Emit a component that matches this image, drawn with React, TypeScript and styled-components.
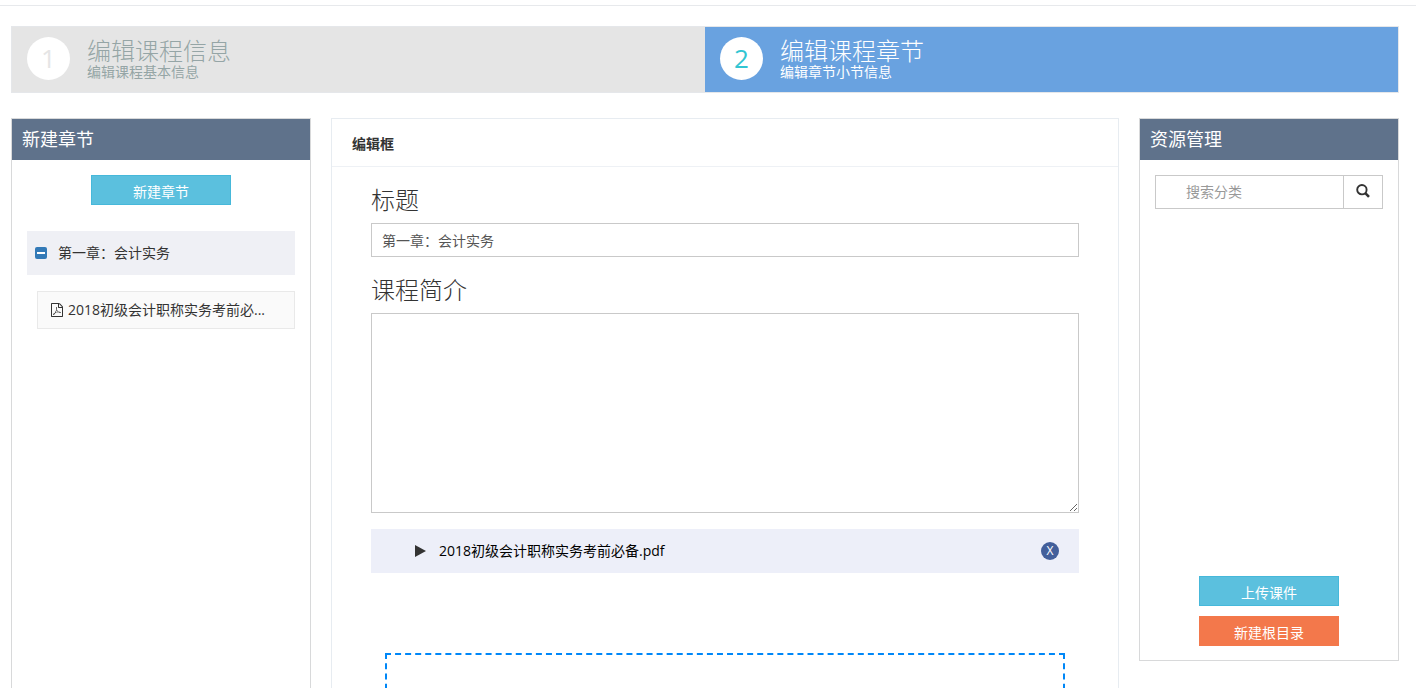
import React from "react";
import styled, { createGlobalStyle } from "styled-components";

const GlobalStyle = createGlobalStyle`
  *, *::before, *::after { box-sizing: border-box; }
  body {
    margin: 0;
    background: #fff;
    color: #333;
    font: 14px/20px "Open Sans", "Noto Sans CJK SC", sans-serif;
  }
  h2 { margin: 0; }
  button, input, textarea { font: inherit; border-radius: 0; }
`;

const Shell = styled.div`
  height: 100vh;
  overflow: hidden auto;
  scrollbar-width: none;
  padding-top: 5px;
`;

const Page = styled.main`
  border-top: 1px solid #e7e9ec;
  padding: 20px 17px 20px 11px;
`;

const Steps = styled.nav`
  display: grid;
  grid-template-columns: 1fr 1fr;
  margin-bottom: 25px;
  border: 1px solid #e5e7ea;
`;

const Step = styled.a<{ $active?: boolean }>`
  display: flex;
  gap: 17px;
  height: 65px;
  padding: 10px 15px;
  text-decoration: none;
  color: ${(p) => (p.$active ? "#fff" : "#95a5a6")};
  background: ${(p) => (p.$active ? "#69a2e0" : "#e5e5e5")};
`;

const StepNumber = styled.span<{ $active?: boolean }>`
  flex: none;
  width: 43px;
  height: 43px;
  border-radius: 50%;
  background: #fff;
  color: ${(p) => (p.$active ? "#32c5d2" : "#e5e5e5")};
  font-size: 26px;
  line-height: 43px;
  text-align: center;
`;

const StepText = styled.span`
  display: flex;
  flex-direction: column;
`;

const StepTitle = styled.span`
  font-size: 24px;
  font-weight: 300;
  line-height: 28px;
`;

const StepNote = styled.span`
  line-height: 14px;
`;

const Columns = styled.div`
  display: grid;
  grid-template-columns: 300px minmax(0, 1fr) 260px;
  gap: 20px;
  align-items: start;
`;

const SidePanel = styled.section<{ $tall?: boolean }>`
  display: flex;
  flex-direction: column;
  min-height: ${(p) => (p.$tall ? "720px" : "543px")};
  border: 1px solid #d8d9da;
`;

const PanelTitle = styled.h2`
  padding: 0 10px;
  background: #5f728b;
  color: #fff;
  font-size: 18px;
  font-weight: 400;
  line-height: 41px;
`;

const PanelBody = styled.div`
  display: flex;
  flex: 1;
  flex-direction: column;
  padding: 15px 15px 14px;
`;

const ActionButton = styled.button<{ $tone?: "orange" }>`
  align-self: center;
  width: 140px;
  height: 30px;
  padding: 4px 0 0;
  border: 1px solid ${(p) => (p.$tone ? "#f3784b" : "#46b8da")};
  background: ${(p) => (p.$tone ? "#f3784b" : "#5bc0de")};
  color: #fff;
  line-height: 24px;
`;

const Chapter = styled.div`
  display: flex;
  align-items: center;
  gap: 11px;
  height: 44px;
  margin-top: 26px;
  padding: 0 8px;
  background: #eff0f5;
`;

const Lesson = styled.a`
  display: flex;
  align-items: center;
  gap: 5px;
  height: 38px;
  margin: 16px 0 0 10px;
  padding: 0 13px;
  border: 1px solid #e9e9e9;
  background: #fafafa;
  color: #333;
  text-decoration: none;
  white-space: nowrap;

  svg { flex: none; }
`;

const Editor = styled.section`
  min-height: 720px;
  border: 1px solid #e7ecf1;
`;

const EditorTitle = styled.h2`
  padding: 2px 20px 0;
  border-bottom: 1px solid #eef1f5;
  font-size: 14px;
  line-height: 45px;
`;

const EditorBody = styled.form`
  display: flex;
  flex-direction: column;
  padding: 16px 39px 40px;
`;

const FieldLabel = styled.label`
  font-size: 24px;
  font-weight: 300;
  line-height: 34px;
  margin-bottom: 6px;
`;

const TitleInput = styled.input`
  height: 34px;
  margin-bottom: 16px;
  padding: 0 10px;
  border: 1px solid #c9c9c9;
  color: #555;
`;

const Intro = styled.textarea`
  height: 200px;
  margin-bottom: 16px;
  padding: 6px 10px;
  border: 1px solid #c9c9c9;
  resize: vertical;
`;

const FileRow = styled.div`
  display: flex;
  align-items: center;
  height: 44px;
  padding: 0 20px 0 44px;
  background: #edeff9;
  color: #000;
`;

const FileName = styled.span`
  flex: 1;
  padding-left: 13px;
`;

const RemoveButton = styled.button`
  width: 18px;
  height: 18px;
  padding: 0;
  border: 0;
  border-radius: 50%;
  background: #435f9b;
  color: #fff;
  font-size: 12px;
  line-height: 18px;
`;

const DropZone = styled.div`
  min-height: 150px;
  margin: 80px 14px 0;
  border: 2px dashed #0087f7;
`;

const SearchGroup = styled.div`
  display: flex;
  height: 34px;
`;

const SearchInput = styled.input`
  flex: 1;
  min-width: 0;
  padding: 0 30px;
  border: 1px solid #c9c9c9;

  &::placeholder { color: #999; opacity: 1; }
`;

const SearchButton = styled.button`
  display: flex;
  align-items: center;
  justify-content: center;
  width: 39px;
  padding: 0 0 2px;
  border: 1px solid #c9c9c9;
  border-left: 0;
  background: #fff;
  color: #333;
`;

const Actions = styled.div`
  display: flex;
  flex-direction: column;
  gap: 10px;
  margin-top: auto;
`;

const MinusIcon = () => (
  <svg width="12" height="12" viewBox="0 0 12 12" aria-hidden="true">
    <rect width="12" height="12" rx="2" fill="#337ab7" />
    <rect x="2" y="5" width="8" height="2" fill="#fff" />
  </svg>
);

const PdfIcon = () => (
  <svg width="12" height="14" viewBox="0 0 1536 1792" fill="currentColor" aria-hidden="true">
    <path d="M1468 380q28 28 48 76t20 88v1152q0 40-28 68t-68 28h-1344q-40 0-68-28t-28-68v-1600q0-40 28-68t68-28h896q40 0 88 20t76 48zm-444-244v376h376q-10-29-22-41l-313-313q-12-12-41-22zm384 1528v-1024h-416q-40 0-68-28t-28-68v-416h-768v1536h1280zm-514-593q33 26 84 56 59-7 117-7 147 0 177 49 16 22 2 52 0 1-1 2l-2 2v1q-6 38-71 38-48 0-115-20t-130-53q-221 24-392 83-153 262-242 262-15 0-28-7l-24-12q-1-1-6-5-10-10-6-36 9-40 56-91.5t132-96.5q14-9 23 6 2 2 2 4 52-85 107-197 68-136 104-262-24-82-30.5-159.5t6.5-127.5q11-40 42-40h22q23 0 35 15 18 21 9 68-2 6-4 8 1 3 1 8v30q-2 123-14 192 55 164 146 238zm-576 411q52-24 137-158-51 40-87.5 84t-49.5 74zm398-920q-15 42-2 132 1-7 7-44 0-3 7-43 1-4 4-8-1-1-1-2t-1-2q-1-22-13-36 0 1-1 2v2zm-124 661q135-54 284-81-2-1-13-9.5t-16-13.5q-76-67-127-176-27 86-83 197-30 56-45 83zm646-16q-24-24-140-24 76 28 124 28 14 0 18-1 0-1-2-3z" />
  </svg>
);

const SearchIcon = () => (
  <svg width="14" height="14" viewBox="0 0 14 14" fill="none" stroke="currentColor" aria-hidden="true">
    <circle cx="5.9" cy="5.7" r="4.7" strokeWidth="1.9" />
    <path d="M9.3 9.2l3.7 3.7" strokeWidth="2.6" />
  </svg>
);

const PlayIcon = () => (
  <svg width="11" height="12" viewBox="0 0 11 12" fill="#333" aria-hidden="true">
    <path d="M0 0l11 6-11 6z" />
  </svg>
);

const steps = [
  { title: "编辑课程信息", note: "编辑课程基本信息" },
  { title: "编辑课程章节", note: "编辑章节小节信息" },
];

export default function App() {
  const current = 1;
  return (
    <Shell>
      <GlobalStyle />
      <Page>
        <Steps>
          {steps.map((step, i) => (
            <Step key={step.title} href="#" $active={i === current}>
              <StepNumber $active={i === current}>{i + 1}</StepNumber>
              <StepText>
                <StepTitle>{step.title}</StepTitle>
                <StepNote>{step.note}</StepNote>
              </StepText>
            </Step>
          ))}
        </Steps>
        <Columns>
          <SidePanel $tall>
            <PanelTitle>新建章节</PanelTitle>
            <PanelBody>
              <ActionButton type="button">新建章节</ActionButton>
              <Chapter>
                <MinusIcon />
                <span>第一章：会计实务</span>
              </Chapter>
              <Lesson href="#">
                <PdfIcon />
                <span>2018初级会计职称实务考前必...</span>
              </Lesson>
            </PanelBody>
          </SidePanel>
          <Editor>
            <EditorTitle>编辑框</EditorTitle>
            <EditorBody>
              <FieldLabel htmlFor="title">标题</FieldLabel>
              <TitleInput id="title" defaultValue="第一章：会计实务" />
              <FieldLabel htmlFor="intro">课程简介</FieldLabel>
              <Intro id="intro" />
              <FileRow>
                <PlayIcon />
                <FileName>2018初级会计职称实务考前必备.pdf</FileName>
                <RemoveButton type="button">X</RemoveButton>
              </FileRow>
              <DropZone />
            </EditorBody>
          </Editor>
          <SidePanel>
            <PanelTitle>资源管理</PanelTitle>
            <PanelBody>
              <SearchGroup role="search">
                <SearchInput type="text" placeholder="搜索分类" aria-label="搜索分类" />
                <SearchButton type="button" aria-label="搜索">
                  <SearchIcon />
                </SearchButton>
              </SearchGroup>
              <Actions>
                <ActionButton type="button">上传课件</ActionButton>
                <ActionButton type="button" $tone="orange">新建根目录</ActionButton>
              </Actions>
            </PanelBody>
          </SidePanel>
        </Columns>
      </Page>
    </Shell>
  );
}
